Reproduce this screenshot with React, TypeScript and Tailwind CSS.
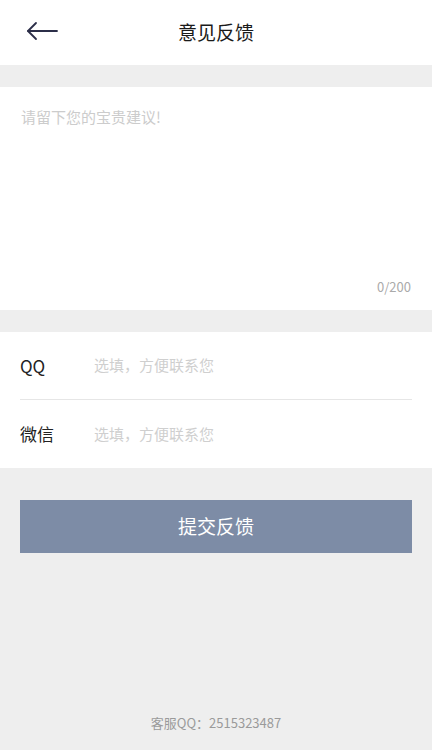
import { useState } from 'react';

const font = { fontFamily: '"Noto Sans CJK SC", "Noto Sans", sans-serif' };

function ContactRow({ label, value, onChange, bordered }: { label: string; value: string; onChange: (v: string) => void; bordered?: boolean }) {
  return (
    <div className={`flex h-[68px] items-center ${bordered ? 'border-b border-[#e6e6e6]' : ''}`}>
      <span className="w-[74px] text-[17px] text-[#222]">{label}</span>
      <input
        value={value}
        onChange={(e) => onChange(e.target.value)}
        placeholder="选填，方便联系您"
        className="flex-1 bg-transparent text-[15px] text-[#333] outline-none placeholder:text-[#cfcfcf]"
      />
    </div>
  );
}

export default function App() {
  const [content, setContent] = useState('');
  const [qq, setQq] = useState('');
  const [wechat, setWechat] = useState('');

  return (
    <div className="flex min-h-[750px] flex-col bg-[#eeeeee]" style={font}>
      <header className="relative flex h-[65px] items-center justify-center bg-white">
        <button className="absolute left-[26px] top-[20px] p-0" aria-label="返回">
          <svg width="34" height="22" viewBox="0 0 34 22" fill="none" stroke="#2b2e48" strokeWidth="1.8" strokeLinecap="round" strokeLinejoin="round">
            <path d="M2 11h29" />
            <path d="M10 3 2 11l8 8" />
          </svg>
        </button>
        <h1 className="text-[19px] text-[#1a1a1a]">意见反馈</h1>
      </header>

      <div className="mt-[22px] flex h-[223px] flex-col bg-white px-[21px] pt-[18px] pb-[14px]">
        <textarea
          value={content}
          maxLength={200}
          onChange={(e) => setContent(e.target.value)}
          placeholder="请留下您的宝贵建议!"
          className="flex-1 resize-none bg-transparent text-[15px] leading-[24px] text-[#333] outline-none placeholder:text-[#cccccc]"
        />
        <div className="text-right text-[13px] text-[#aaaaaa]">{content.length}/200</div>
      </div>

      <div className="mt-[22px] bg-white px-[20px]">
        <ContactRow label="QQ" value={qq} onChange={setQq} bordered />
        <ContactRow label="微信" value={wechat} onChange={setWechat} />
      </div>

      <div className="px-[20px] pt-[32px]">
        <button className="h-[53px] w-full bg-[#7d8ca6] text-[19px] text-white">提交反馈</button>
      </div>

      <div className="flex-1" />
      <p className="pb-[18px] text-center text-[13px] text-[#9a9a9a]">客服QQ：2515323487</p>
    </div>
  );
}
